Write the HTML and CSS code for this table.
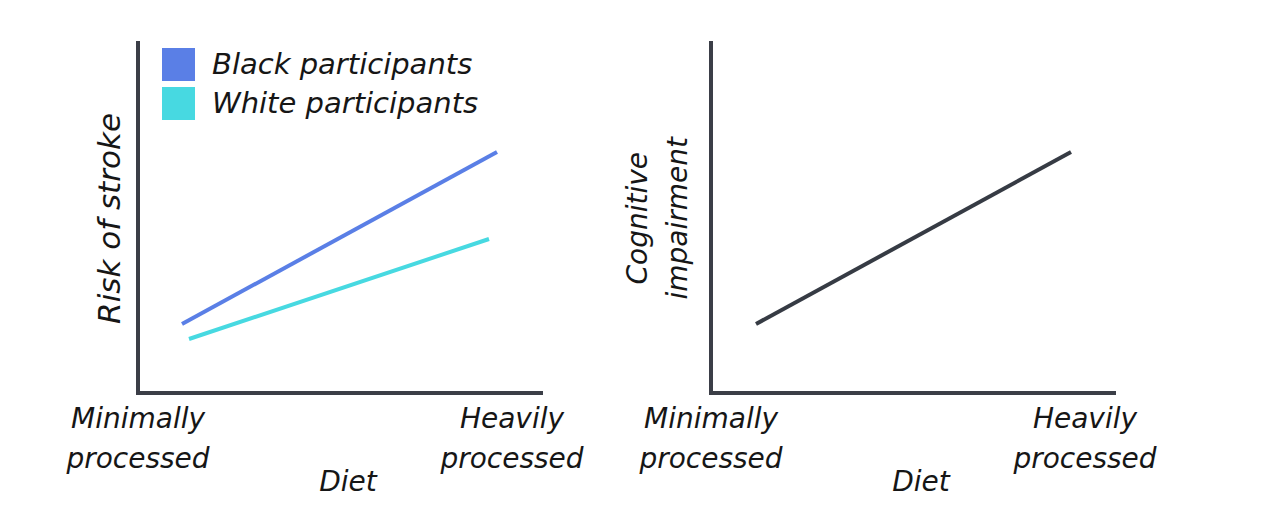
FILE: index.html
```html
<!DOCTYPE html>
<html lang="en">
<head>
<meta charset="utf-8">
<title>Diet charts</title>
<link rel="stylesheet" href="styles.css">
</head>
<body>
<main class="page">
  <figure class="chart">
    <div class="top">
      <div class="ylabel"><span class="ytext">Risk of stroke</span></div>
      <div class="plot">
        <svg class="canvas" width="412" height="358" viewBox="0 0 412 358">
          <path class="axis" d="M2 2 V354 H407"/>
          <line class="series blue" x1="46" y1="285" x2="361" y2="113"/>
          <line class="series cyan" x1="53" y1="300" x2="353" y2="200"/>
        </svg>
        <ul class="legend">
          <li class="legend-row"><span class="swatch swatch-blue"></span><span>Black participants</span></li>
          <li class="legend-row"><span class="swatch swatch-cyan"></span><span>White participants</span></li>
        </ul>
      </div>
    </div>
    <div class="xlabels">
      <div class="xl xl-start">Minimally<br>processed</div>
      <div class="xl xl-title">Diet</div>
      <div class="xl xl-end">Heavily<br>processed</div>
    </div>
  </figure>

  <figure class="chart">
    <div class="top">
      <div class="ylabel ylabel-two"><span class="ytext ytext-two">Cognitive<br>impairment</span></div>
      <div class="plot">
        <svg class="canvas" width="412" height="358" viewBox="0 0 412 358">
          <path class="axis" d="M2 2 V354 H407"/>
          <line class="series dark" x1="47" y1="285" x2="362" y2="113"/>
        </svg>
      </div>
    </div>
    <div class="xlabels">
      <div class="xl xl-start">Minimally<br>processed</div>
      <div class="xl xl-title">Diet</div>
      <div class="xl xl-end">Heavily<br>processed</div>
    </div>
  </figure>
</main>
</body>
</html>
```

FILE: styles.css
```css
* { box-sizing: border-box; }

html, body {
  margin: 0;
  padding: 0;
  background: #ffffff;
}

body {
  width: 1279px;
  height: 530px;
  overflow: hidden;
  font-family: "DejaVu Sans", "Liberation Sans", sans-serif;
  font-style: italic;
  color: #161616;
}

.page {
  display: flex;
  padding: 39px 0 0 36px;
}

.chart {
  margin: 0;
  width: 573px;
  display: flex;
  flex-direction: column;
}

.top {
  display: flex;
  height: 358px;
}

.ylabel {
  width: 100px;
  display: flex;
  align-items: center;
  justify-content: flex-end;
  padding-right: 8px;
}

.ylabel-two {
  padding-right: 11px;
}

.ytext {
  writing-mode: vertical-rl;
  transform: rotate(180deg);
  font-size: 31px;
  line-height: 37px;
  text-align: center;
  white-space: nowrap;
}

.ytext-two {
  font-size: 28px;
  line-height: 40px;
}

.plot {
  position: relative;
  width: 412px;
  height: 358px;
}

.canvas {
  display: block;
}

.axis {
  fill: none;
  stroke: #3b3e47;
  stroke-width: 4;
  stroke-linejoin: miter;
}

.series {
  stroke-width: 4;
  stroke-linecap: butt;
}

.blue { stroke: #5a7fe6; }
.cyan { stroke: #47d9e1; }
.dark { stroke: #363b44; }

.legend {
  position: absolute;
  left: 26px;
  top: 9px;
  margin: 0;
  padding: 0;
  list-style: none;
  display: flex;
  flex-direction: column;
  gap: 6px;
}

.legend-row {
  display: flex;
  align-items: center;
  gap: 17px;
  height: 33px;
  font-size: 29px;
  line-height: 33px;
  white-space: nowrap;
}

.swatch {
  width: 33px;
  height: 33px;
  flex: none;
}

.swatch-blue { background: #5a7fe6; }
.swatch-cyan { background: #47d9e1; }

.xlabels {
  display: flex;
  margin-top: 2px;
  font-size: 28px;
  line-height: 40px;
}

.xl {
  text-align: center;
  white-space: nowrap;
}

.xl-start { width: 204px; }

.xl-title {
  width: 192px;
  padding-left: 24px;
  margin-top: 63px;
}

.xl-end { width: 160px; }
```
